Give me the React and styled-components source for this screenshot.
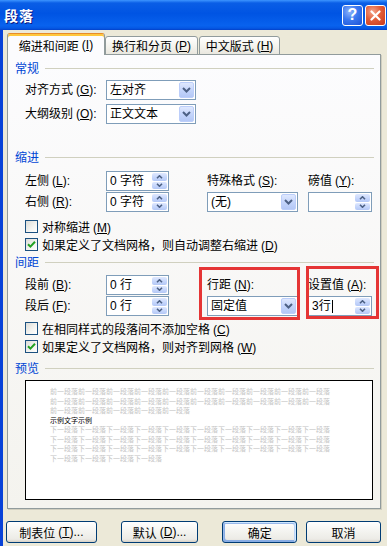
import styled, { createGlobalStyle } from 'styled-components';

const GlobalStyle = createGlobalStyle`
  html, body {
    margin: 0;
    padding: 0;
  }
  body {
    font-family: "Liberation Sans", "Noto Sans CJK SC", sans-serif;
    font-size: 12px;
    color: #000;
  }
  * {
    box-sizing: border-box;
  }
`;

const PREV = '前一段落'.repeat(25);
const NEXT = '下一段落'.repeat(34);

function Mn({ text, k, colon = true }) {
  return (
    <>
      {text}
      <Gap />(<u>{k}</u>){colon ? ':' : ''}
    </>
  );
}

function ChevronDown() {
  return (
    <svg width='9' height='6' viewBox='0 0 9 6'>
      <path d='M1 1l3.5 3.5L8 1' fill='none' stroke='#4D6185' strokeWidth='2' />
    </svg>
  );
}

function ChevronUp() {
  return (
    <svg width='7' height='4' viewBox='0 0 7 4'>
      <path d='M1 3.3l2.5-2.5L6 3.3' fill='none' stroke='#4D6185' strokeWidth='1.6' />
    </svg>
  );
}

function ChevronDownSmall() {
  return (
    <svg width='7' height='4' viewBox='0 0 7 4'>
      <path d='M1 0.7l2.5 2.5L6 0.7' fill='none' stroke='#4D6185' strokeWidth='1.6' />
    </svg>
  );
}

function Select({ value, width }) {
  return (
    <Field $w={width}>
      <FieldValue>{value}</FieldValue>
      <DropButton>
        <ChevronDown />
      </DropButton>
    </Field>
  );
}

function Spinner({ value, width, caret }) {
  return (
    <Field $w={width}>
      <FieldValue>
        {value}
        {caret && <Caret />}
      </FieldValue>
      <SpinBox>
        <SpinHalf>
          <ChevronUp />
        </SpinHalf>
        <SpinHalf>
          <ChevronDownSmall />
        </SpinHalf>
      </SpinBox>
    </Field>
  );
}

function Check({ checked, children }) {
  return (
    <CheckRow>
      <CheckBox>
        {checked && (
          <svg width='9' height='9' viewBox='0 0 9 9'>
            <path d='M1 4.2l2.4 2.4L8 1.8' fill='none' stroke='#21A121' strokeWidth='2' />
          </svg>
        )}
      </CheckBox>
      <span>{children}</span>
    </CheckRow>
  );
}

export default function App() {
  return (
    <>
      <GlobalStyle />
      <Window>
        <TitleBar>
          <Title>段落</Title>
          <TitleButton $kind='help'>?</TitleButton>
          <TitleButton $kind='close'>
            <svg width='11' height='11' viewBox='0 0 11 11'>
              <path d='M1.5 1.5l8 8M9.5 1.5l-8 8' stroke='#fff' strokeWidth='2.2' strokeLinecap='round' />
            </svg>
          </TitleButton>
        </TitleBar>

        <Body>
          <Tabs>
            <Tab $active $w={98}>
              <Mn text='缩进和间距' k='I' colon={false} />
            </Tab>
            <Tab $w={93}>
              <Mn text='换行和分页' k='P' colon={false} />
            </Tab>
            <Tab $w={81} $ml={1}>
              <Mn text='中文版式' k='H' colon={false} />
            </Tab>
          </Tabs>

          <Panel>
            <Section>
              <Heading>常规</Heading>
              <FieldGrid $cols='81px 90px' $rowGap={4} $mt={5}>
                <Label>
                  <Mn text='对齐方式' k='G' />
                </Label>
                <Select value='左对齐' width={90} />
                <Label>
                  <Mn text='大纲级别' k='O' />
                </Label>
                <Select value='正文文本' width={90} />
              </FieldGrid>
            </Section>

            <Section $mt={26}>
              <Heading>缩进</Heading>
              <FieldGrid $cols='81px 101px 101px 64px' $rowGap={1} $mt={7}>
                <Label>
                  <Mn text='左侧' k='L' />
                </Label>
                <Spinner value='0 字符' width={63} />
                <Label>
                  <Mn text='特殊格式' k='S' />
                </Label>
                <Label>
                  <Mn text='磅值' k='Y' />
                </Label>
                <Label>
                  <Mn text='右侧' k='R' />
                </Label>
                <Spinner value='0 字符' width={63} />
                <Select value='(无)' width={91} />
                <Spinner value='' width={64} />
              </FieldGrid>
              <Checks $mt={5}>
                <Check>
                  <Mn text='对称缩进' k='M' colon={false} />
                </Check>
                <Check checked>
                  <Mn text='如果定义了文档网格，则自动调整右缩进' k='D' colon={false} />
                </Check>
              </Checks>
            </Section>

            <Section $mt={2}>
              <Heading>间距</Heading>
              <FieldGrid $cols='81px 101px 101px 64px' $rowGap={1} $mt={6}>
                <Label>
                  <Mn text='段前' k='B' />
                </Label>
                <Spinner value='0 行' width={63} />
                <Framed $frame='first'>
                  <Label>
                    <Mn text='行距' k='N' />
                  </Label>
                  <Select value='固定值' width={91} />
                </Framed>
                <Framed $frame='second'>
                  <Label>
                    <Mn text='设置值' k='A' />
                  </Label>
                  <Spinner value='3行' width={64} caret />
                </Framed>
                <Label>
                  <Mn text='段后' k='F' />
                </Label>
                <Spinner value='0 行' width={63} />
              </FieldGrid>
              <Checks $mt={3}>
                <Check>
                  <Mn text='在相同样式的段落间不添加空格' k='C' colon={false} />
                </Check>
                <Check checked>
                  <Mn text='如果定义了文档网格，则对齐到网格' k='W' colon={false} />
                </Check>
              </Checks>
            </Section>

            <Section $mt={6}>
              <Heading>预览</Heading>
              <Preview>
                <PreviewText>{PREV}</PreviewText>
                <PreviewText $dark>示例文字示例</PreviewText>
                <PreviewText>{NEXT}</PreviewText>
              </Preview>
            </Section>
          </Panel>

          <ButtonRow>
            <Button $w={91} $mr={24}>
              制表位<Gap />(<u>T</u>)...
            </Button>
            <Button $w={78} $mr={24}>
              默认<Gap />(<u>D</u>)...
            </Button>
            <Button $w={75} $mr={9} $default>
              确定
            </Button>
            <Button $w={75}>取消</Button>
          </ButtonRow>
        </Body>
      </Window>
    </>
  );
}

const Window = styled.div`
  width: 387px;
  height: 546px;
  display: flex;
  flex-direction: column;
  background: #ece9d8;
  overflow: hidden;
`;

const TitleBar = styled.div`
  flex: none;
  height: 30px;
  display: flex;
  align-items: center;
  gap: 2px;
  padding: 0 1px 0 4px;
  background: linear-gradient(
    180deg,
    #3d95ff 0%,
    #0a5ee6 10%,
    #0054e3 45%,
    #0862ee 85%,
    #0558e4 94%,
    #0340c8 100%
  );
`;

const Title = styled.div`
  flex: 1;
  font-family: "Noto Sans CJK SC", sans-serif;
  font-size: 14px;
  font-weight: 700;
  color: #fff;
  text-shadow: 1px 1px 0 #0a1883;
  letter-spacing: 1px;
`;

const TitleButton = styled.div`
  width: 21px;
  height: 21px;
  border: 1px solid #fff;
  border-radius: 3px;
  display: flex;
  align-items: center;
  justify-content: center;
  color: #fff;
  font-family: "Liberation Sans", sans-serif;
  font-size: 16px;
  font-weight: 700;
  background: ${(p) =>
    p.$kind === 'close'
      ? 'radial-gradient(circle at 35% 30%, #f4a58d 0%, #e25d38 45%, #c8391c 100%)'
      : 'radial-gradient(circle at 35% 30%, #8fb4fb 0%, #3b78ef 45%, #1c52d6 100%)'};
`;

const Body = styled.div`
  flex: 1;
  display: flex;
  flex-direction: column;
  padding: 3px 6px 0 4px;
  border-left: 3px solid #0842d8;
`;

const Tabs = styled.div`
  display: flex;
  align-items: flex-end;
  height: 22px;
  margin-bottom: -1px;
  position: relative;
  z-index: 1;
`;

const Tab = styled.div`
  width: ${(p) => p.$w}px;
  height: ${(p) => (p.$active ? 22 : 19)}px;
  margin-left: ${(p) => p.$ml || 0}px;
  display: flex;
  align-items: center;
  justify-content: center;
  white-space: nowrap;
  border: 1px solid #919b9c;
  border-radius: 3px 3px 0 0;
  border-bottom: ${(p) => (p.$active ? 'none' : '1px solid #919b9c')};
  border-top-color: ${(p) => (p.$active ? '#e68b2c' : '#919b9c')};
  box-shadow: ${(p) => (p.$active ? 'inset 0 2px 0 #ffc73c' : 'none')};
  background: ${(p) =>
    p.$active ? '#fcfcfe' : 'linear-gradient(180deg, #ffffff 0%, #f3f2ec 60%, #e9e7df 100%)'};
  padding-top: ${(p) => (p.$active ? 1 : 0)}px;
`;

const Gap = styled.span`
  display: inline-block;
  width: 3px;
`;

const Panel = styled.div`
  height: 455px;
  display: flex;
  flex-direction: column;
  padding: 6px 6px 0 7px;
  border: 1px solid #919b9c;
  background: linear-gradient(180deg, #fcfcfe 0%, #f4f3ee 100%);
  box-shadow: 1px 1px 0 #d0cebf;
`;

const Section = styled.section`
  display: flex;
  flex-direction: column;
  margin-top: ${(p) => p.$mt || 0}px;
`;

const Heading = styled.div`
  display: flex;
  align-items: center;
  height: 14px;
  line-height: 14px;
  color: #0046d5;
  font-family: "Noto Sans CJK SC", sans-serif;

  &::after {
    content: '';
    flex: 1;
    height: 1px;
    margin-left: 6px;
    background: #d0d0bf;
  }
`;

const FieldGrid = styled.div`
  display: grid;
  grid-template-columns: ${(p) => p.$cols};
  grid-auto-rows: 20px;
  row-gap: ${(p) => p.$rowGap}px;
  align-items: center;
  margin: ${(p) => p.$mt}px 0 0 10px;
`;

const Label = styled.div`
  white-space: nowrap;
  line-height: 20px;
`;

const Framed = styled.div`
  grid-row: span 2;
  display: grid;
  grid-auto-rows: 20px;
  row-gap: 1px;
  align-items: center;
  position: relative;

  &::after {
    content: '';
    position: absolute;
    pointer-events: none;
    border: 3px solid #e53535;
    ${(p) =>
      p.$frame === 'first'
        ? 'top: -8px; left: -8px; right: 8px; bottom: -4px;'
        : 'top: -9px; left: -2px; right: -7px; bottom: -3px;'}
  }
`;

const Field = styled.div`
  width: ${(p) => p.$w}px;
  height: 20px;
  display: flex;
  align-items: stretch;
  border: 1px solid #7f9db9;
  background: #fff;
`;

const FieldValue = styled.div`
  flex: 1;
  display: flex;
  align-items: center;
  padding-left: 3px;
  white-space: nowrap;
  line-height: 18px;
`;

const Caret = styled.span`
  display: inline-block;
  width: 1px;
  height: 13px;
  margin-left: 1px;
  background: #000;
`;

const DropButton = styled.div`
  width: 15px;
  margin: 1px;
  display: flex;
  align-items: center;
  justify-content: center;
  border-radius: 2px;
  border: 1px solid #bccefa;
  background: linear-gradient(180deg, #dfe8fe 0%, #c3d4fb 55%, #b4c8f6 100%);
`;

const SpinBox = styled.div`
  width: 15px;
  margin: 1px;
  display: flex;
  flex-direction: column;
  gap: 1px;
`;

const SpinHalf = styled.div`
  flex: 1;
  display: flex;
  align-items: center;
  justify-content: center;
  border-radius: 2px;
  background: linear-gradient(180deg, #dfe8fe 0%, #c3d4fb 60%, #b4c8f6 100%);
`;

const Checks = styled.div`
  display: flex;
  flex-direction: column;
  margin: ${(p) => p.$mt}px 0 0 10px;
`;

const CheckRow = styled.div`
  display: flex;
  align-items: center;
  gap: 4px;
  height: 18px;
  white-space: nowrap;
`;

const CheckBox = styled.span`
  width: 13px;
  height: 13px;
  flex: none;
  display: flex;
  align-items: center;
  justify-content: center;
  border: 1px solid #1c5180;
  background: linear-gradient(135deg, #dcdcd7 0%, #f4f4f1 60%, #ffffff 100%);
`;

const Preview = styled.div`
  height: 120px;
  margin: 5px 1px 0 10px;
  padding: 6px 0 0 24px;
  border: 1px solid #000;
  background: #fff;
`;

const PreviewText = styled.div`
  width: 282px;
  font-family: "Noto Sans CJK SC", sans-serif;
  font-size: 7px;
  line-height: 9.5px;
  word-break: break-all;
  color: ${(p) => (p.$dark ? '#000' : '#c4c4c4')};
`;

const ButtonRow = styled.div`
  display: flex;
  margin: 12px 0 0 -1px;
`;

const Button = styled.div`
  width: ${(p) => p.$w}px;
  height: 22px;
  margin-right: ${(p) => p.$mr || 0}px;
  display: flex;
  align-items: center;
  justify-content: center;
  white-space: nowrap;
  border: 1px solid #003c74;
  border-radius: 3px;
  background: linear-gradient(180deg, #ffffff 0%, #f3f3ef 50%, #ecebe6 86%, #d6d0c5 100%);
  box-shadow: ${(p) =>
    p.$default
      ? 'inset -1px 1px #cee7ff, inset 1px 2px #98b8ea, inset -2px 2px #bcd4f6, inset 1px -1px #89ade4, inset 2px -2px #89ade4'
      : 'none'};
`;
